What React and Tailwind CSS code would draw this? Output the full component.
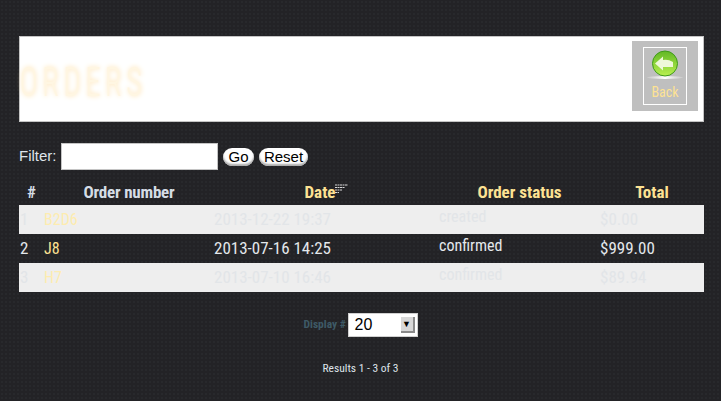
import React from 'react';

const bodyFont = "font-['Liberation_Sans_Narrow','Roboto_Condensed','Roboto',sans-serif]";

const orders = [
  { id: 1, number: 'B2D6', date: '2013-12-22 19:37', status: 'created', total: '$0.00' },
  { id: 2, number: 'J8', date: '2013-07-16 14:25', status: 'confirmed', total: '$999.00' },
  { id: 3, number: 'H7', date: '2013-07-10 16:46', status: 'confirmed', total: '$89.94' },
];

function BackIcon() {
  return (
    <svg width="38" height="31" viewBox="0 0 38 31">
      <defs>
        <linearGradient id="ball" x1="0" y1="0" x2="0" y2="1">
          <stop offset="0" stopColor="#62b825" />
          <stop offset="1" stopColor="#b9f050" />
        </linearGradient>
        <linearGradient id="base" x1="0" y1="0" x2="1" y2="0">
          <stop offset="0" stopColor="#f6f6f6" stopOpacity="0.2" />
          <stop offset="0.5" stopColor="#ffffff" />
          <stop offset="1" stopColor="#f6f6f6" stopOpacity="0.2" />
        </linearGradient>
      </defs>
      <ellipse cx="19" cy="27.5" rx="18" ry="1.5" fill="url(#base)" />
      <circle cx="19" cy="13.5" r="12.5" fill="url(#ball)" stroke="#3f9a1a" strokeWidth="1" />
      <path d="M9 13.5 L17 6.5 L17 10 Q22 9 27 12 L27 17 L17 17 L17 20.5 Z" fill="#eef8d8" />
    </svg>
  );
}

function SortIcon() {
  return (
    <svg width="13" height="10" viewBox="0 0 13 10" className="mt-[-6px]">
      <path d="M0 1H13M0 3.5H10M0 6H7M0 8.5H4" stroke="#d8d8d8" strokeWidth="1" strokeDasharray="2 0.5" />
    </svg>
  );
}

export default function App() {
  return (
    <div className={`w-[721px] h-[401px] overflow-hidden bg-[#232326] bg-[radial-gradient(#28292c_1px,transparent_1px)] bg-[length:4px_4px] pt-9 px-[19px] ${bodyFont}`}>
      {/* Title box */}
      <div className="w-[685px] h-[86px] bg-white border border-[#c4c4c4] flex justify-between pr-[5px] pt-1">
        <h1 className="mt-[18px] text-[40px] leading-[48px] font-light tracking-[6px] origin-left scale-x-[0.76] text-[#fff6e2] [text-shadow:0_0_6px_#ffdfa8]">
          ORDERS
        </h1>
        <div className="w-[66px] h-[70px] bg-[#bfbfbf] flex items-center justify-center">
          <div className="w-[44px] h-[58px] border border-white flex flex-col items-center pt-[2px]">
            <BackIcon />
            <span className="text-[14px] leading-[16px] mt-[3px] text-[#fde293]">Back</span>
          </div>
        </div>
      </div>

      {/* Filter */}
      <div className="flex items-center mt-[21px] h-[27px] font-['Liberation_Sans',sans-serif] text-[15px]">
        <span className="text-[#dfe4ea] w-[42px]">Filter:</span>
        <input className="w-[157px] h-[27px] bg-white border border-[#c4c4c4] outline-none" />
        <button className="ml-[5px] w-[31px] h-[18px] rounded-full bg-white text-black leading-[18px] shadow-[inset_0_-2px_2px_#aaa]">Go</button>
        <button className="ml-[5px] w-[49px] h-[18px] rounded-full bg-white text-black leading-[18px] shadow-[inset_0_-2px_2px_#aaa]">Reset</button>
      </div>

      {/* Orders table */}
      <table className="w-[685px] table-fixed border-collapse mt-[13px]">
        <colgroup>
          <col className="w-[25px]" />
          <col className="w-[170px]" />
          <col className="w-[225px]" />
          <col className="w-[161px]" />
          <col className="w-[104px]" />
        </colgroup>
        <thead>
          <tr className="h-[22px] text-[17px] font-bold leading-[18px]">
            <th className="text-center text-[#d5dde5] pb-1">#</th>
            <th className="text-center text-[#d5dde5] pb-1 tracking-[-0.2px]">Order number</th>
            <th className="text-[#fde293] pb-1">
              <span className="inline-flex items-center justify-center">Date<SortIcon /></span>
            </th>
            <th className="text-center text-[#fde293] pb-1">Order status</th>
            <th className="text-center text-[#fde293] pb-1">Total</th>
          </tr>
        </thead>
        <tbody>
          {orders.map(order => {
            const odd = order.id % 2 === 1;
            return (
              <tr key={order.id} className={`h-[29px] ${odd ? 'bg-[#eeeeee] text-[#e2e5e8]' : 'text-[#e4e8ec]'}`}>
                <td className="pl-[1px] text-[17px]">{order.id}</td>
                <td className={`text-[16px] ${odd ? 'text-[#fdecb0]' : 'text-[#fde293]'}`}>{order.number}</td>
                <td className="text-[17px]">{order.date}</td>
                <td className="pb-[5px] text-[16px]">{order.status}</td>
                <td className="text-[17px]">{order.total}</td>
              </tr>
            );
          })}
        </tbody>
      </table>

      {/* Pagination */}
      <div className="flex items-center justify-center mt-[21px] h-[24px]">
        <span className="w-[44px] text-[11.5px] font-bold whitespace-nowrap text-[#3e5a66]">Display #</span>
        <div className="w-[70px] h-[24px] bg-white border border-[#d0d0d0] flex items-center justify-between pl-[6px] pr-[2px] font-['Liberation_Sans',sans-serif] text-[16px] text-black">
          <span>20</span>
          <span className="w-[14px] h-[16px] bg-[#d8d8d8] border-r-2 border-b-2 border-[#8a8a8a] flex items-center justify-center text-[9px] leading-none">▼</span>
        </div>
      </div>
      <p className="mt-[24px] text-center text-[11.5px] leading-[14px] text-[#dfe4ea]">Results 1 - 3 of 3</p>
    </div>
  );
}
